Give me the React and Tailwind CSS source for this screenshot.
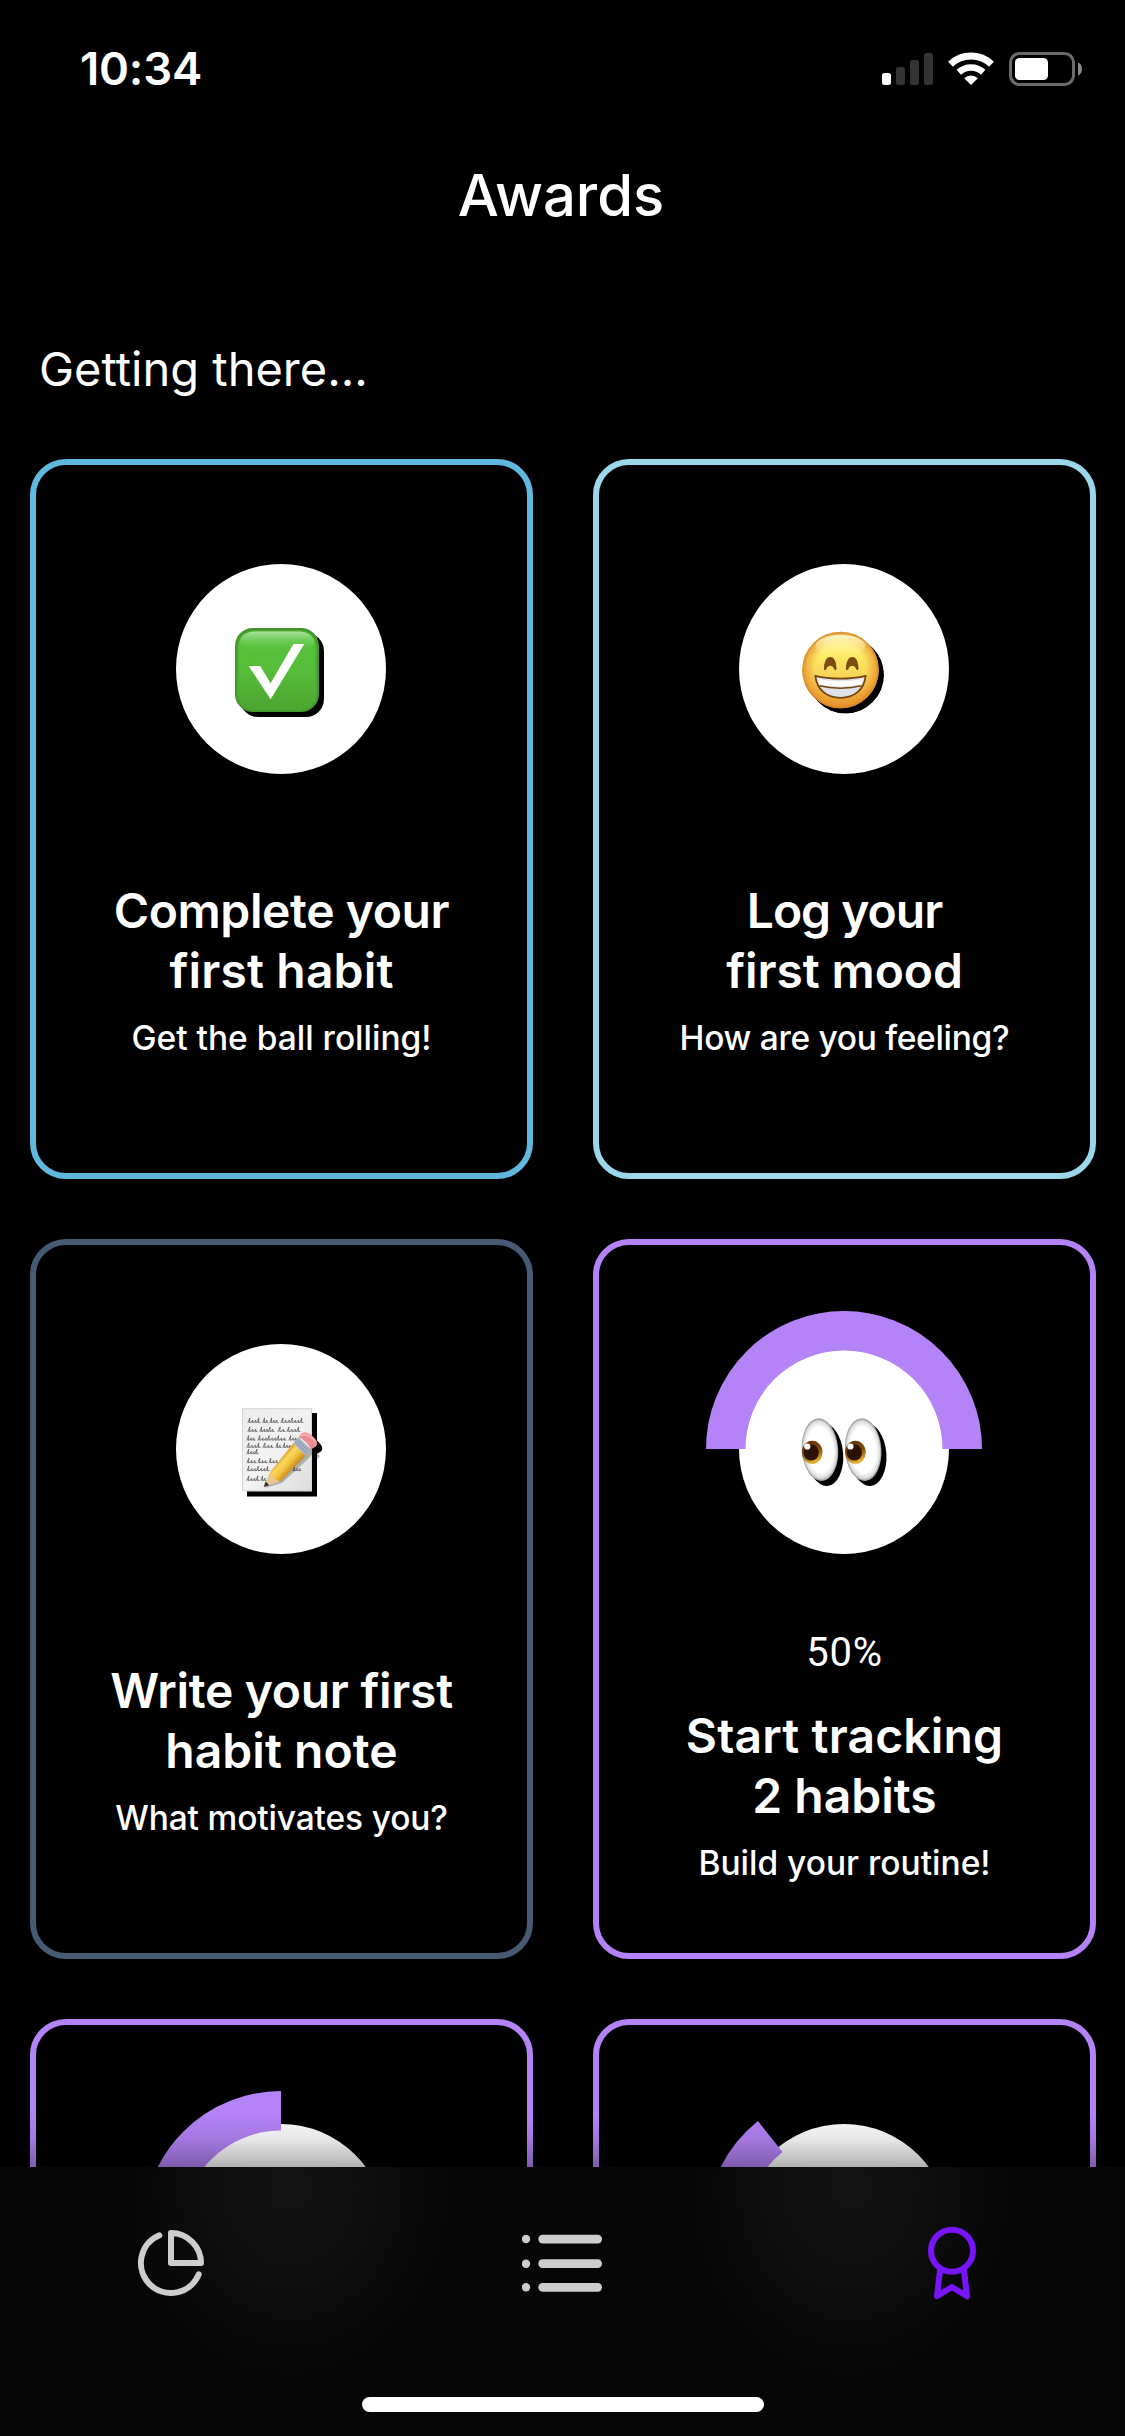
function StatusBar() {
  return (
    <div className="flex h-[120px] shrink-0 items-start justify-between pl-[80px] pr-[43px]">
      <span className="mt-[39px] text-[45.5px] leading-[60px] font-semibold tracking-[-0.2px]">10:34</span>
      <svg className="mt-[50px]" width="202" height="38" viewBox="880 50 202 38">
        <rect x="882" y="73" width="9" height="12" rx="2.5" fill="#fff" />
        <rect x="896" y="67" width="9" height="18" rx="2.5" fill="#333" />
        <rect x="910" y="60" width="9" height="25" rx="2.5" fill="#333" />
        <rect x="924" y="53" width="9" height="32" rx="2.5" fill="#333" />
        <g fill="none" stroke="#fff">
          <path d="M950.5 64.2 A29.5 29.5 0 0 1 991.5 64.2" strokeWidth="7" />
          <path d="M958.8 72.3 A18 18 0 0 1 983.2 72.3" strokeWidth="6.6" />
        </g>
        <path d="M971 85 L964.2 78.2 A9.8 9.8 0 0 1 977.8 78.2 Z" fill="#fff" />
        <rect x="1010.5" y="53.5" width="63" height="31" rx="9" fill="none" stroke="#6b6b6b" strokeWidth="3" />
        <rect x="1015" y="58" width="33" height="22" rx="4.5" fill="#fff" />
        <path d="M1078 62.5 C1083.3 64.5 1083.3 73.5 1078 75.5 Z" fill="#8a8a8a" />
      </svg>
    </div>
  );
}

const emojiClass = "relative left-[-4px] top-px overflow-visible drop-shadow-[5px_5px_0_#000]";

function CheckEmoji() {
  return (
    <svg className={emojiClass} width="84" height="84" viewBox="0 0 84 84">
      <defs>
        <linearGradient id="chk" x1="0" y1="0" x2="0" y2="1">
          <stop offset="0" stopColor="#58c43c" />
          <stop offset="0.5" stopColor="#55bd39" />
          <stop offset="1" stopColor="#4ca52f" />
        </linearGradient>
        <linearGradient id="chkShine" x1="0" y1="0" x2="0" y2="1">
          <stop offset="0" stopColor="#a9e19d" />
          <stop offset="1" stopColor="#5ac63f" stopOpacity="0" />
        </linearGradient>
      </defs>
      <rect width="84" height="84" rx="18" fill="#419529" />
      <rect x="1.5" y="2" width="81" height="80.5" rx="17" fill="#4ba932" />
      <rect x="3.5" y="3.5" width="77" height="78" rx="16" fill="url(#chk)" />
      <rect x="5" y="3.5" width="74" height="20" rx="15" fill="url(#chkShine)" />
      <path d="M13.7 37.9H25.2L35.6 55.3L58.5 16H69.3L35.6 71.3Z" fill="#fff" />
    </svg>
  );
}

function GrinEmoji() {
  return (
    <svg className={emojiClass} width="84" height="84" viewBox="0 0 84 84">
      <defs>
        <linearGradient id="face" x1="0" y1="0" x2="0" y2="1">
          <stop offset="0" stopColor="#fff3a0" />
          <stop offset="0.3" stopColor="#fdec68" />
          <stop offset="0.65" stopColor="#f8cd50" />
          <stop offset="1" stopColor="#e99a36" />
        </linearGradient>
        <radialGradient id="faceRim" cx="0.5" cy="0.5" r="0.5">
          <stop offset="0.66" stopColor="#e8962c" stopOpacity="0" />
          <stop offset="0.93" stopColor="#e58f2a" stopOpacity="0.7" />
          <stop offset="1" stopColor="#cf7d1e" stopOpacity="0.9" />
        </radialGradient>
        <linearGradient id="faceTop" x1="0" y1="0" x2="0" y2="1">
          <stop offset="0" stopColor="#fffac8" />
          <stop offset="1" stopColor="#fff08a" stopOpacity="0" />
        </linearGradient>
      </defs>
      <circle cx="42.5" cy="42" r="38.3" fill="url(#face)" />
      <circle cx="42.5" cy="42" r="38.3" fill="url(#faceRim)" />
      <ellipse cx="42.5" cy="18" rx="25" ry="11" fill="url(#faceTop)" />
      <g fill="#7d4c0e">
        <path d="M26 41C26 33.500 28.500 29 32.300 29C36.100 29 38.500 33.500 38.500 41C38.500 42.500 36.500 42.300 36 40.800C34.800 36.800 29.700 36.800 28.500 40.800C28 42.300 26 42.500 26 41Z" />
        <path d="M48 41C48 33.500 50.500 29 54.300 29C58.100 29 60.500 33.500 60.500 41C60.500 42.500 58.500 42.300 58 40.800C56.800 36.800 51.700 36.800 50.500 40.800C50 42.300 48 42.500 48 41Z" />
      </g>
      <path d="M17.3 47.8C32 51.5 53 51.5 67.7 47.8C66 62 56 69.8 42.5 69.8C29 69.8 19 62 17.3 47.8Z" fill="#dfe3e9" stroke="#74450f" strokeWidth="1.8" strokeLinejoin="round" />
      <path d="M20 51C34 54 51 54 65 51L63 56.5C50 59 35 59 22 56.5Z" fill="#fff" />
      <path d="M21.5 57.8C34 61 51 61 63.5 57.8" fill="none" stroke="#74450f" strokeWidth="1.5" />
    </svg>
  );
}

const scribbles = [
  [13, 13, 12], [28, 13, 5], [35, 13, 8], [46, 13, 22],
  [13, 22, 9], [25, 22, 14], [43, 22, 7], [52, 22, 13],
  [12, 30.7, 8], [23, 30.7, 28], [54, 30.7, 8],
  [12, 38, 13], [28, 38, 10], [41, 38, 5], [48, 38, 8],
  [12, 44.3, 11],
  [12, 53.3, 9], [23, 53.3, 9], [34, 53.3, 9],
  [12, 61.3, 22], [58, 61.3, 8],
  [12, 71, 12], [26, 71, 5],
];

function scribblePath([x, y, w]) {
  const n = Math.max(2, Math.round(w / 3));
  const step = w / n;
  let d = `M${x} ${y + 1.5}`;
  for (let i = 0; i < n; i++) {
    const up = i % 3 === 0 ? 4.6 : 2.4;
    d += `l${step * 0.6} ${-up}l${-step * 0.1} ${up}l${step * 0.5} -0.4l0 0.4`;
  }
  return d;
}

function MemoEmoji() {
  return (
    <svg className={emojiClass} width="84" height="84" viewBox="0 0 84 84">
      <defs>
        <linearGradient id="paper" x1="0" y1="0" x2="1" y2="1">
          <stop offset="0" stopColor="#ececec" />
          <stop offset="0.5" stopColor="#f3f3f3" />
          <stop offset="1" stopColor="#dcdcdc" />
        </linearGradient>
        <linearGradient id="pencil" x1="46" y1="50" x2="58" y2="61" gradientUnits="userSpaceOnUse">
          <stop offset="0" stopColor="#dfa52f" />
          <stop offset="0.25" stopColor="#f9d860" />
          <stop offset="0.6" stopColor="#f1c13c" />
          <stop offset="1" stopColor="#c98a1d" />
        </linearGradient>
      </defs>
      <rect x="7" y="0.3" width="70" height="83" fill="url(#paper)" />
      <rect x="7.5" y="0.8" width="69" height="82" fill="none" stroke="#d4d4d4" />
      <g fill="none" stroke="#5c5c5c" strokeWidth="0.8" strokeLinecap="round" strokeLinejoin="round">
        {scribbles.map((s, i) => <path key={i} d={scribblePath(s)} />)}
      </g>
      <path d="M30 80L47 75L73 51L80 43L76 39Z" fill="#000" opacity="0.25" />
      <path d="M28.8 79L35 64.3L45.7 73.3Z" fill="#e8c891" />
      <path d="M35 64.3L58.3 35.3L70.5 47.8L45.7 73.3C43 74 42 71 40.5 71C38 71 38.5 68 37.5 67.5C35.5 67.5 35 65.5 35 64.3Z" fill="url(#pencil)" />
      <path d="M28.8 79L30.6 73.6L34.3 77.2Z" fill="#2b2f33" />
      <path d="M58.3 35.3L63.3 29.3L76 41.3L70.5 47.8Z" fill="#a9b3c4" />
      <path d="M60 33.3L72.2 45.8M61.7 31.3L74.2 43.6" stroke="#7988a0" strokeWidth="0.9" />
      <path d="M63.3 29.3L66 26C70 22.5 76 26 79.5 30C83 34 83 37 80.5 38.8L76 41.3C74 36 68 31 63.3 29.3Z" fill="#ea8e93" />
      <path d="M66 27.5C71 25 77 29 79.8 33" stroke="#f5b4b5" strokeWidth="1.8" fill="none" strokeLinecap="round" />
    </svg>
  );
}

function Eye({ x }) {
  return (
    <g transform={`translate(${x} 1)`}>
      <ellipse cx="22" cy="40.7" rx="18.2" ry="31.4" fill="url(#eyeball)" transform="rotate(-4 22 40.7)" />
      <ellipse cx="14.2" cy="43.3" rx="10.4" ry="11.5" fill="url(#iris)" />
      <ellipse cx="13.2" cy="43.5" rx="7.6" ry="8" fill="#2a1204" />
      <circle cx="9.3" cy="37.5" r="3.1" fill="#fff" />
    </g>
  );
}

function EyesEmoji() {
  return (
    <svg className={emojiClass} width="84" height="84" viewBox="0 0 84 84">
      <defs>
        <radialGradient id="eyeball" cx="0.5" cy="0.5" r="0.5">
          <stop offset="0.72" stopColor="#fff" />
          <stop offset="0.9" stopColor="#dedede" />
          <stop offset="1" stopColor="#929292" />
        </radialGradient>
        <linearGradient id="iris" x1="0" y1="0" x2="0.3" y2="1">
          <stop offset="0" stopColor="#5a2b08" />
          <stop offset="0.55" stopColor="#854a0c" />
          <stop offset="1" stopColor="#e0ae2c" />
        </linearGradient>
      </defs>
      <Eye x={0} />
      <Eye x={43.2} />
    </svg>
  );
}

function Badge({ progress = 0, children }) {
  return (
    <div className="relative mr-px grid h-[276px] w-[276px] shrink-0 place-items-center">
      <div className="grid h-[210px] w-[210px] place-items-center rounded-full bg-white">{children}</div>
      {progress > 0 && (
        <svg className="absolute inset-0" width="276" height="276" viewBox="0 0 276 276">
          <circle
            cx="138" cy="138" r="118.25" fill="none" stroke="#b583f8" strokeWidth="39.5"
            pathLength="100" strokeDasharray={`${progress} 100`} transform="rotate(180 138 138)"
          />
        </svg>
      )}
    </div>
  );
}

function AwardCard({ border, icon, progress, percent, title, subtitle, subtitleTracking }) {
  return (
    <div className={`flex h-[720px] flex-col items-center rounded-[36px] border-[6px] pt-[66px] text-center ${border}`}>
      <Badge progress={progress}>{icon}</Badge>
      {percent && (
        <div className="mt-[42px] font-[Roboto] text-[40px] leading-[48px] tracking-[0.7px]">{percent}</div>
      )}
      {title && (
        <h2 className={`text-[48px] leading-[60px] font-semibold ${percent ? "mt-[29px]" : "mt-[74px]"}`}>
          {title.map(([line, tracking]) => (
            <span key={line} className={`block ${tracking}`}>{line}</span>
          ))}
        </h2>
      )}
      {subtitle && <p className={`mt-[15px] text-[33.5px] leading-[45px] font-medium ${subtitleTracking}`}>{subtitle}</p>}
    </div>
  );
}

const awards = [
  {
    border: "border-[#60b8de]",
    icon: <CheckEmoji />,
    title: [["Complete your", "tracking-[-0.4px]"], ["first habit", "tracking-[0.15px]"]],
    subtitle: "Get the ball rolling!",
    subtitleTracking: "tracking-[0px]",
  },
  {
    border: "border-[#9bd7ea]",
    icon: <GrinEmoji />,
    title: [["Log your", "tracking-[-1px]"], ["first mood", "tracking-[-0.1px]"]],
    subtitle: "How are you feeling?",
    subtitleTracking: "tracking-[-0.3px]",
  },
  {
    border: "border-[#475a73]",
    icon: <MemoEmoji />,
    title: [["Write your first", "tracking-[-0.3px]"], ["habit note", "tracking-[0.05px]"]],
    subtitle: "What motivates you?",
    subtitleTracking: "tracking-[-0.15px]",
  },
  {
    border: "border-[#b583f8]",
    icon: <EyesEmoji />,
    progress: 50,
    percent: "50%",
    title: [["Start tracking", "tracking-[0.15px]"], ["2 habits", "tracking-[0px]"]],
    subtitle: "Build your routine!",
    subtitleTracking: "tracking-[0px]",
  },
  { border: "border-[#b583f8]", progress: 25 },
  { border: "border-[#b583f8]", progress: 14.286 },
];

function TabBar() {
  return (
    <nav className="flex h-[269px] shrink-0 flex-col items-center justify-between bg-[#060606] bg-[radial-gradient(ellipse_170px_200px_at_290px_20px,#141414,transparent),radial-gradient(ellipse_170px_200px_at_850px_20px,#141414,transparent)] pb-[24px]">
      <div className="flex w-full items-start pt-[58px] pl-[137px]">
        <svg width="68" height="74" viewBox="137 2225 68 74" fill="none" stroke="#cdcdcd" strokeWidth="6" strokeLinecap="round" strokeLinejoin="round">
          <path d="M171 2233A30 30 0 0 1 201 2263H171Z" />
          <path d="M159.3 2235.3A30 30 0 1 0 198.7 2274.3" />
        </svg>
        <svg className="ml-[317px]" width="80" height="74" viewBox="522 2225 80 74" fill="#cdcdcd">
          <circle cx="526" cy="2239" r="4.2" />
          <circle cx="526" cy="2263.7" r="4.2" />
          <circle cx="526" cy="2287.3" r="4.2" />
          <rect x="538.3" y="2234.7" width="63.7" height="8.7" rx="4.35" />
          <rect x="538.3" y="2259.3" width="63.7" height="8.7" rx="4.35" />
          <rect x="538.3" y="2283" width="63.7" height="8.7" rx="4.35" />
        </svg>
        <svg className="ml-[324px]" width="52" height="76" viewBox="926 2225 52 76" fill="none" stroke="#7714fa" strokeWidth="6" strokeLinecap="round" strokeLinejoin="round">
          <circle cx="952" cy="2250.7" r="21" />
          <path d="M940 2270.5L937 2296.3L952 2287L967 2296.3L964 2270.5" />
        </svg>
      </div>
      <div className="h-[15px] w-[402px] rounded-full bg-white" />
    </nav>
  );
}

export default function App() {
  return (
    <div className="flex h-[2436px] w-[1125px] flex-col overflow-hidden bg-black font-[Inter,sans-serif] text-white">
      <StatusBar />
      <header className="flex h-[150px] shrink-0 justify-center pr-[3px]">
        <h1 className="mt-[39px] h-[72px] text-[58px] leading-[72px] font-medium">Awards</h1>
      </header>
      <main className="relative min-h-0 flex-1 overflow-hidden">
        <h2 className="mt-[69px] ml-[39px] text-[47px] leading-[60px]">Getting there...</h2>
        <div className="mt-[60px] ml-[30px] grid w-[1066px] grid-cols-2 gap-[60px]">
          {awards.map((award, i) => <AwardCard key={i} {...award} />)}
        </div>
        <div className="absolute inset-x-0 bottom-0 h-[54px] bg-linear-to-b from-transparent via-black/10 to-black/30" />
      </main>
      <TabBar />
    </div>
  );
}
